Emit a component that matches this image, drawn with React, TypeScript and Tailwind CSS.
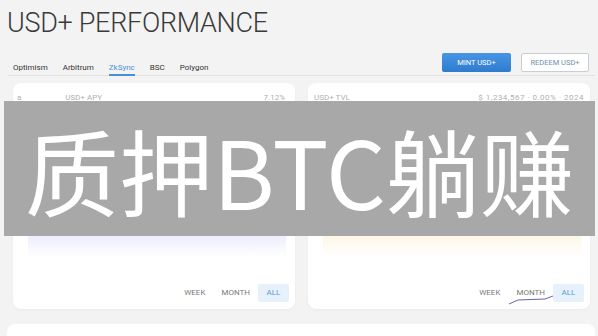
import React from "react";

function RangeButtons({ squiggle }: { squiggle?: boolean }) {
  return (
    <div className="relative flex justify-end pr-[6px] text-[8px] leading-[18px] h-[18px]">
      <div className="px-[8px] text-[#7a7a7a]">WEEK</div>
      <div className="px-[8px] text-[#7a7a7a]">MONTH</div>
      <div className="px-[8px] w-[31px] text-center text-[#5a9cd8] bg-[#e7f1fb] rounded-[2px]">ALL</div>
      {squiggle && (
        <svg className="absolute left-[200px] top-[9px]" width="50" height="12" viewBox="0 0 50 12">
          <path d="M1 11 L10 7 L37 6 L45 3" fill="none" stroke="#6d63b0" strokeWidth="1" />
        </svg>
      )}
    </div>
  );
}

function Card({ left, gradient }: { left: React.ReactNode; gradient: string }) {
  return (
    <div className="w-[282px] h-[226px] bg-white rounded-[8px] shadow-[0_1px_3px_rgba(0,0,0,0.04)] flex flex-col">
      <div className="h-[28px] pt-[10px] px-[4px] flex items-start text-[8px] leading-[10px] text-[#b0b0b0]">{left}</div>
      <div className="flex-1 relative">
        <div className={`absolute left-[15px] right-[9px] bottom-[27px] h-[34px] ${gradient}`} />
      </div>
      <div className="pb-[7px]">
        <RangeButtons squiggle={gradient.includes("fdf2d9")} />
      </div>
    </div>
  );
}

export default function App() {
  return (
    <div
      className="relative w-[598px] h-[336px] overflow-hidden bg-[#f3f3f3]"
      style={{ fontFamily: "Roboto, 'Liberation Sans', sans-serif" }}
    >
      <div className="pl-[7px] pt-[7px] h-[39px] text-[27px] tracking-[-0.3px] leading-[32px] font-light text-[#3a3a3a]">
        USD+ PERFORMANCE
      </div>
      <div className="ml-[8px] mr-[3px] mt-[14px] h-[23px] border-b border-[#e2e2e2] flex items-start justify-between">
        <div className="flex gap-[15px] pl-[5px] text-[8px] text-[#333]">
          <div className="h-[23px] pt-[10px] leading-[10px]">Optimism</div>
          <div className="h-[23px] pt-[10px] leading-[10px]">Arbitrum</div>
          <div className="h-[23px] pt-[10px] leading-[10px] text-[#4a90d6] border-b-2 border-[#4a90d6]">ZkSync</div>
          <div className="h-[23px] pt-[10px] leading-[10px]">BSC</div>
          <div className="h-[23px] pt-[10px] leading-[10px]">Polygon</div>
        </div>
        <div className="flex gap-[10px] pr-[6px] pt-[0px]">
          <div className="w-[69px] h-[19px] rounded-[2px] bg-gradient-to-b from-[#4795e3] to-[#2f7ccf] text-white text-[7.5px] leading-[19px] text-center">
            MINT USD+
          </div>
          <div className="w-[68px] h-[19px] rounded-[2px] bg-white border border-[#c9ced4] text-[#6f8fb3] text-[7.5px] leading-[17px] text-center">
            REDEEM USD+
          </div>
        </div>
      </div>
      <div className="flex gap-[13px] pl-[13px] mt-[7px]">
        <Card
          gradient="bg-gradient-to-b from-[#e3e3fc] to-white"
          left={
            <div className="flex w-full">
              <span>a</span>
              <span className="ml-[44px]">USD+ APY</span>
              <span className="ml-auto mr-[6px]">7.12%</span>
            </div>
          }
        />
        <Card
          gradient="bg-gradient-to-b from-[#fdf2d9] to-white"
          left={
            <div className="flex w-full pl-[2px]">
              <span>USD+ TVL</span>
              <span className="ml-auto mr-[2px] tracking-[0.5px]">$ 1,234,567 · 0.00% · 2024</span>
            </div>
          }
        />
      </div>
      <div className="ml-[7px] mr-[3px] mt-[15px] h-[40px] bg-white rounded-[8px]" />

      <div className="absolute left-[4px] top-[101px] w-[591px] h-[135px] bg-[#a8a8a8] flex items-center justify-center">
        <span
          className="text-white text-[94px] leading-none"
          style={{ fontFamily: "'Noto Sans CJK SC', 'Noto Sans', sans-serif" }}
        >
          质押BTC躺赚
        </span>
      </div>
    </div>
  );
}
